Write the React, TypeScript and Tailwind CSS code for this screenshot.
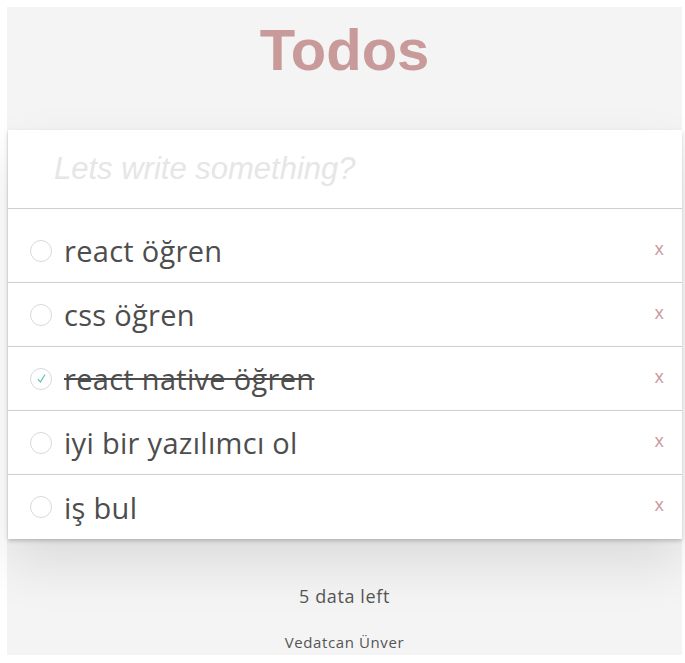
import React from "react";

const todos = [
  { text: "react öğren", done: false },
  { text: "css öğren", done: false },
  { text: "react native öğren", done: true },
  { text: "iyi bir yazılımcı ol", done: false },
  { text: "iş bul", done: false },
];

export default function App() {
  return (
    <div className="w-full bg-white pt-[7px] pl-[7px] pr-[3px] pb-[8px]">
      <div className="relative h-[648px] bg-[#f4f4f4] flex flex-col" style={{ fontFamily: '"Open Sans", "Noto Sans", sans-serif' }}>
        <h1
          className="mt-[14px] text-center text-[58px] font-bold leading-none text-[#c99a9a]"
          style={{ fontFamily: '"Liberation Sans", Arial, sans-serif' }}
        >
          Todos
        </h1>
        <div className="mt-[51px] ml-[1px] mr-0 bg-white shadow-[0_2px_4px_rgba(0,0,0,0.2),0_25px_50px_rgba(0,0,0,0.1)]">
          <div className="h-[79px] border-b border-[#cfcfcf] flex items-center pl-[46px]">
            <span
              className="text-[31px] italic text-[#e6e6e6]"
              style={{ fontFamily: '"Liberation Sans", Arial, sans-serif' }}
            >
              Lets write something?
            </span>
          </div>
          <ul>
            {todos.map((t, i) => (
              <li
                key={i}
                className={`flex items-center pl-[22px] pr-[18px] ${i === 0 ? "h-[74px] pt-[10px]" : "h-[64px]"} ${i < todos.length - 1 ? "border-b border-[#cfcfcf]" : ""}`}
              >
                <span className="w-[22px] h-[22px] rounded-full border border-[#d9d9d9] flex items-center justify-center shrink-0">
                  {t.done && (
                    <svg width="11" height="11" viewBox="0 0 11 11">
                      <path d="M2 6.2 L4.4 9 L9 1.5" fill="none" stroke="#5dc2af" strokeWidth="1.2" />
                    </svg>
                  )}
                </span>
                <span
                  className={`ml-[12px] text-[29px] tracking-[0.3px] text-[#4d4d4d] leading-none flex-1 ${t.done ? "line-through decoration-[#4d4d4d]" : ""}`}
                >
                  {t.text}
                </span>
                <span className="text-[18px] text-[#cc9a9a] leading-none pb-[6px]">x</span>
              </li>
            ))}
          </ul>
        </div>
        <div className="mt-[48px] text-center text-[18px] tracking-[0.6px] text-[#555] leading-none">5 data left</div>
        <div className="mt-[30px] text-center text-[15px] tracking-[0.6px] text-[#555] leading-none">Vedatcan Ünver</div>
      </div>
    </div>
  );
}
